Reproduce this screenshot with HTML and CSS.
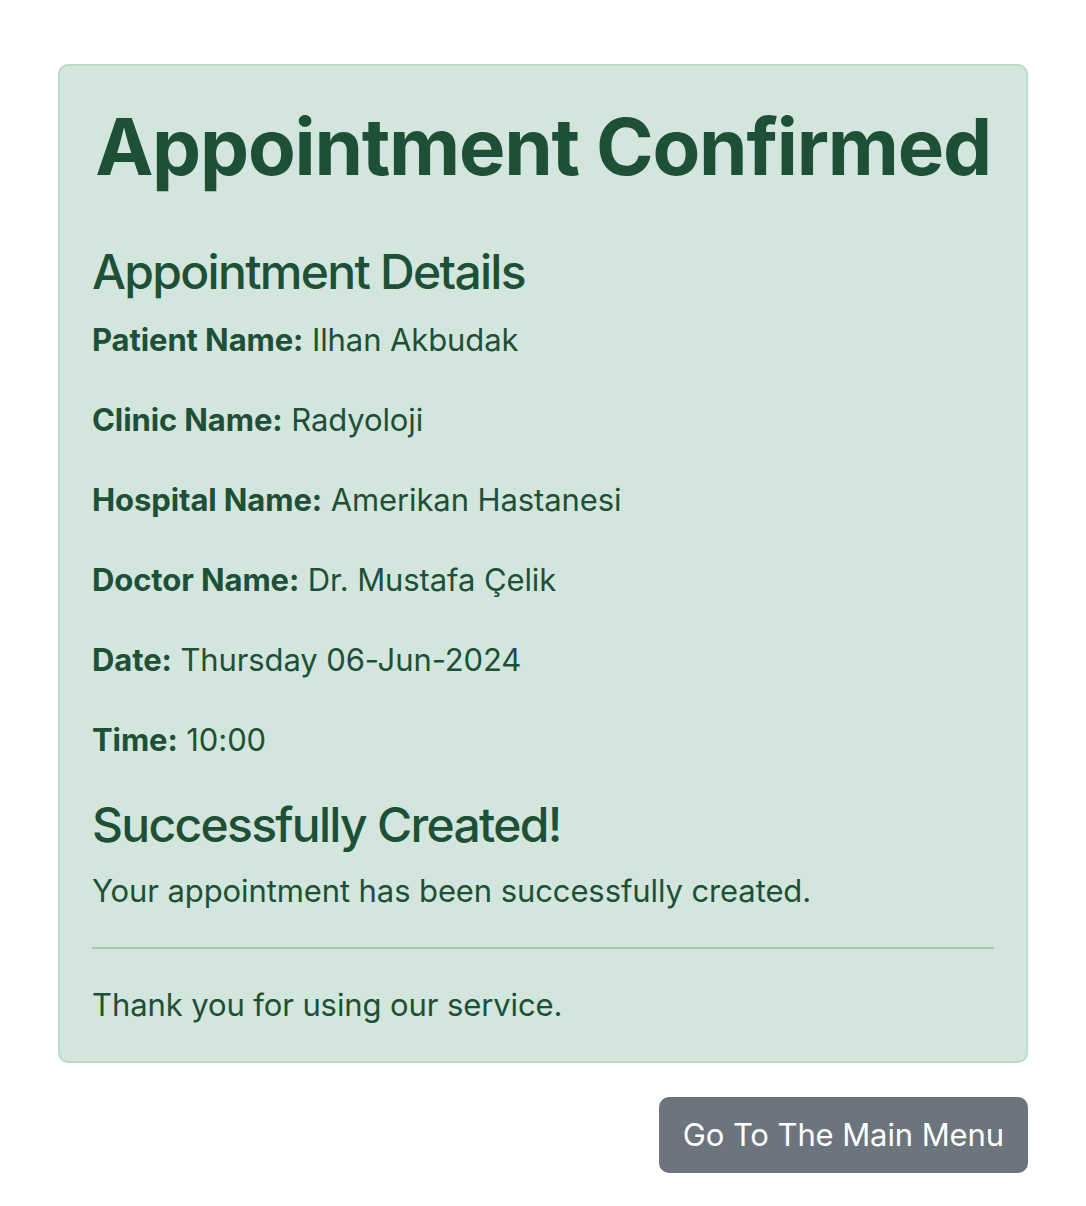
FILE: index.html
```html
<!DOCTYPE html>
<html lang="en">
<head>
<meta charset="utf-8">
<title>Appointment Confirmed</title>
<link rel="stylesheet" href="styles.css">
</head>
<body>
<div class="container">
  <div class="alert">
    <h1 class="title">Appointment Confirmed</h1>
    <h2 class="heading">Appointment Details</h2>
    <p><strong>Patient Name:</strong> Ilhan Akbudak</p>
    <p><strong>Clinic Name:</strong> Radyoloji</p>
    <p><strong>Hospital Name:</strong> Amerikan Hastanesi</p>
    <p><strong>Doctor Name:</strong> Dr. Mustafa Çelik</p>
    <p><strong>Date:</strong> Thursday 06-Jun-2024</p>
    <p><strong>Time:</strong> 10:00</p>
    <h2 class="heading heading-tight">Successfully Created!</h2>
    <p>Your appointment has been successfully created.</p>
    <hr class="divider">
    <p class="last">Thank you for using our service.</p>
  </div>
  <div class="actions">
    <a class="btn" href="#">Go To The Main Menu</a>
  </div>
</div>
</body>
</html>
```

FILE: styles.css
```css
* { box-sizing: border-box; }

html, body {
  margin: 0;
  padding: 0;
  background: #ffffff;
}

body {
  font-family: Inter, "Noto Sans", "Liberation Sans", sans-serif;
  font-size: 31px;
  line-height: 48px;
  letter-spacing: -0.1px;
  color: #212529;
}

.container {
  width: 970px;
  margin: 64px 0 0 58px;
}

.alert {
  background: #d3e6dd;
  border: 2px solid #bcdacb;
  border-radius: 10px;
  color: #1d5036;
  padding: 32px;
}

.title {
  margin: 0 0 49px 0;
  padding-top: 2px;
  font-size: 78px;
  font-weight: 700;
  line-height: 1.2;
  text-align: center;
  letter-spacing: -1.25px;
  white-space: nowrap;
}

.heading {
  margin: 0 0 16px 0;
  font-size: 48px;
  font-weight: 500;
  line-height: 1.2;
  letter-spacing: -1.7px;
}

.heading-tight {
  margin-bottom: 13px;
}

.alert p {
  margin: 0 0 32px 0;
}

.alert p.last {
  margin-bottom: 0;
}

.alert strong {
  font-weight: 700;
}

.divider {
  margin: 32px 0;
  border: 0;
  border-top: 2px solid #a9c5b8;
}

.actions {
  display: flex;
  justify-content: flex-end;
  margin-top: 34px;
}

.btn {
  display: inline-block;
  background: #6c757d;
  border: 2px solid #6c757d;
  color: #ffffff;
  text-decoration: none;
  font-size: 31px;
  line-height: 48px;
  padding: 12px 22px;
  border-radius: 10px;
}
```
